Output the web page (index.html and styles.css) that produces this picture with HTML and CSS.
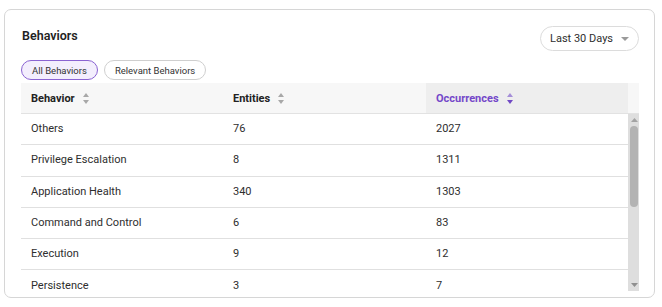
FILE: index.html
```html
<!DOCTYPE html>
<html>
<head>
<meta charset="utf-8">
<link rel="stylesheet" href="styles.css">
</head>
<body>
<div class="card">
  <div class="card-head">
    <h2 class="title">Behaviors</h2>
    <div class="select">
      <span>Last 30 Days</span>
      <svg class="caret" width="8" height="4" viewBox="0 0 8 4"><path d="M0 0 H8 L4 4 Z" fill="#9a9a9a"/></svg>
    </div>
  </div>
  <div class="pills">
    <span class="pill active">All Behaviors</span>
    <span class="pill">Relevant Behaviors</span>
  </div>
  <div class="table">
    <div class="thead">
      <div class="th">Behavior <svg class="sort" width="6" height="11" viewBox="0 0 6 11"><path d="M3 0 L6 4 H0 Z M0 7 H6 L3 11 Z" fill="#a8a8a8"/></svg></div>
      <div class="th">Entities <svg class="sort" width="6" height="11" viewBox="0 0 6 11"><path d="M3 0 L6 4 H0 Z M0 7 H6 L3 11 Z" fill="#a8a8a8"/></svg></div>
      <div class="th sorted">Occurrences <svg class="sort" width="6" height="11" viewBox="0 0 6 11"><path d="M3 0 L6 4 H0 Z" fill="#a58ed8"/><path d="M0 7 H6 L3 11 Z" fill="#7048c4"/></svg></div>
      <div class="th-gutter"></div>
    </div>
    <div class="tbody-wrap">
      <div class="tbody">
        <div class="tr"><div class="td">Others</div><div class="td">76</div><div class="td">2027</div></div>
        <div class="tr"><div class="td">Privilege Escalation</div><div class="td">8</div><div class="td">1311</div></div>
        <div class="tr"><div class="td">Application Health</div><div class="td">340</div><div class="td">1303</div></div>
        <div class="tr"><div class="td">Command and Control</div><div class="td">6</div><div class="td">83</div></div>
        <div class="tr"><div class="td">Execution</div><div class="td">9</div><div class="td">12</div></div>
        <div class="tr"><div class="td">Persistence</div><div class="td">3</div><div class="td">7</div></div>
      </div>
      <div class="scrollbar">
        <svg class="arrow" width="7" height="4" viewBox="0 0 7 4"><path d="M3.5 0 L7 4 H0 Z" fill="#a3a3a3"/></svg>
        <div class="track"><div class="thumb"></div></div>
        <svg class="arrow" width="7" height="4" viewBox="0 0 7 4"><path d="M0 0 H7 L3.5 4 Z" fill="#8f8f8f"/></svg>
      </div>
    </div>
  </div>
</div>
</body>
</html>
```
FILE: styles.css
```css
* { box-sizing: border-box; }
html, body { margin: 0; padding: 0; background: #ffffff; }
body {
  font-family: Roboto, "Liberation Sans", sans-serif;
  color: #2b2b2b;
  width: 662px;
  height: 307px;
  overflow: hidden;
}
.card {
  margin: 9px 0 0 4px;
  width: 651px;
  height: 289px;
  border: 1px solid #d6d6d6;
  border-radius: 7px;
  padding: 16px 15px 0 16px;
  overflow: hidden;
}
.card-head {
  display: flex;
  justify-content: space-between;
  align-items: flex-start;
  height: 25px;
}
.title {
  margin: 0 0 0 1px;
  font-size: 12.5px;
  font-weight: 600;
  line-height: 20px;
  color: #222;
}
.select {
  display: flex;
  align-items: center;
  height: 25px;
  width: 99px;
  border: 1px solid #dcdcdc;
  border-radius: 13px;
  padding: 0 9px 0 9px;
  font-size: 11px;
  color: #2e2e2e;
  justify-content: space-between;
}
.caret { display: block; margin-top: 1px; }
.pills {
  display: flex;
  gap: 6px;
  margin-top: 9px;
  height: 20px;
}
.pill {
  display: flex;
  align-items: center;
  height: 20px;
  padding: 0 10px;
  border: 1px solid #cfcfcf;
  border-radius: 10px;
  font-size: 9.5px;
  color: #333;
  background: #fff;
}
.pill.active {
  border-color: #8a63d2;
  background: #f3eefd;
}
.table {
  margin-top: 3px;
  width: 618px;
}
.thead {
  display: flex;
  height: 31px;
  background: #f7f7f7;
  border-bottom: 1px solid #e2e2e2;
}
.th {
  width: 202px;
  display: flex;
  align-items: center;
  gap: 8px;
  padding: 0 10px;
  font-size: 11px;
  font-weight: 700;
  color: #222;
}
.th:nth-child(2) { width: 203px; }
.th.sorted {
  background: #eeeeee;
  color: #7447c9;
}
.th-gutter { width: 11px; }
.sort { display: block; }
.tbody-wrap {
  display: flex;
  height: 177px;
  overflow: hidden;
}
.tbody { width: 607px; }
.tr {
  display: flex;
  height: 31.3px;
  border-bottom: 1px solid #e0e0e0;
}
.td {
  width: 202px;
  display: flex;
  align-items: center;
  padding: 0 10px;
  font-size: 11px;
  line-height: 12px;
  color: #2e2e2e;
}
.td:nth-child(2) { width: 203px; }
.scrollbar {
  width: 11px;
  background: #dedede;
  display: flex;
  flex-direction: column;
  align-items: center;
  padding: 4px 0 4px 1px;
}
.arrow { display: block; flex: none; }
.track {
  flex: 1;
  width: 100%;
  padding: 4px 1px 0 1px;
}
.thumb {
  width: 8px;
  height: 81px;
  background: #b3b3b3;
  border-radius: 4px;
  margin: 0 auto;
}
```
